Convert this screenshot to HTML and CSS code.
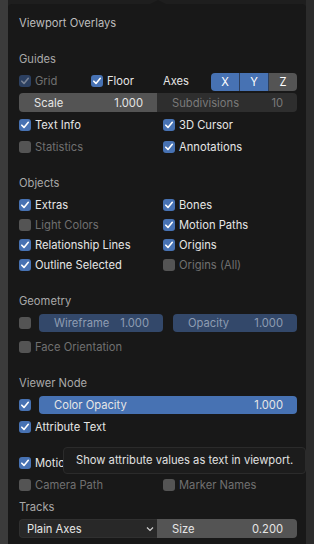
FILE: index.html
```html
<!DOCTYPE html>
<html lang="en">
<head>
    <meta charset="UTF-8">
    <meta name="viewport" content="width=device-width, initial-scale=1.0">
    <title>Viewport Overlays</title>
    <link rel="stylesheet" href="styles.css">
</head>
<body>
    <div class="panel">
        <div class="notch"></div>
        <div class="title">Viewport Overlays</div>

        <div class="heading">Guides</div>
        <div class="row guides-row">
            <div class="check off-dim w72"><span class="box on dim"><svg viewBox="0 0 12 12"><polyline points="2.8,6.2 5,8.4 9.3,3.3"/></svg></span>Grid</div>
            <div class="check w72"><span class="box on"><svg viewBox="0 0 12 12"><polyline points="2.8,6.2 5,8.4 9.3,3.3"/></svg></span>Floor</div>
            <div class="axes-label">Axes</div>
            <div class="toggle-group">
                <span class="toggle on">X</span>
                <span class="toggle on">Y</span>
                <span class="toggle">Z</span>
            </div>
        </div>
        <div class="row slider-row joined">
            <div class="slider grey left"><span>Scale</span><span>1.000</span></div>
            <div class="slider dark right muted"><span>Subdivisions</span><span>10</span></div>
        </div>
        <div class="row cols gap3">
            <div class="check"><span class="box on"><svg viewBox="0 0 12 12"><polyline points="2.8,6.2 5,8.4 9.3,3.3"/></svg></span>Text Info</div>
            <div class="check"><span class="box on"><svg viewBox="0 0 12 12"><polyline points="2.8,6.2 5,8.4 9.3,3.3"/></svg></span>3D Cursor</div>
        </div>
        <div class="row cols">
            <div class="check off-dim"><span class="box"></span>Statistics</div>
            <div class="check"><span class="box on"><svg viewBox="0 0 12 12"><polyline points="2.8,6.2 5,8.4 9.3,3.3"/></svg></span>Annotations</div>
        </div>

        <div class="heading">Objects</div>
        <div class="row cols">
            <div class="check"><span class="box on"><svg viewBox="0 0 12 12"><polyline points="2.8,6.2 5,8.4 9.3,3.3"/></svg></span>Extras</div>
            <div class="check"><span class="box on"><svg viewBox="0 0 12 12"><polyline points="2.8,6.2 5,8.4 9.3,3.3"/></svg></span>Bones</div>
        </div>
        <div class="row cols tight">
            <div class="check off-dim"><span class="box"></span>Light Colors</div>
            <div class="check"><span class="box on"><svg viewBox="0 0 12 12"><polyline points="2.8,6.2 5,8.4 9.3,3.3"/></svg></span>Motion Paths</div>
        </div>
        <div class="row cols tight">
            <div class="check"><span class="box on"><svg viewBox="0 0 12 12"><polyline points="2.8,6.2 5,8.4 9.3,3.3"/></svg></span>Relationship Lines</div>
            <div class="check"><span class="box on"><svg viewBox="0 0 12 12"><polyline points="2.8,6.2 5,8.4 9.3,3.3"/></svg></span>Origins</div>
        </div>
        <div class="row cols tight">
            <div class="check"><span class="box on"><svg viewBox="0 0 12 12"><polyline points="2.8,6.2 5,8.4 9.3,3.3"/></svg></span>Outline Selected</div>
            <div class="check off-dim"><span class="box"></span>Origins (All)</div>
        </div>

        <div class="heading">Geometry</div>
        <div class="row">
            <div class="check solo"><span class="box"></span></div>
            <div class="slider blue-dim w124"><span>Wireframe</span><span>1.000</span></div>
            <div class="slider blue-dim w124 ml10"><span>Opacity</span><span>1.000</span></div>
        </div>
        <div class="row gap4">
            <div class="check off-dim"><span class="box"></span>Face Orientation</div>
        </div>

        <div class="heading">Viewer Node</div>
        <div class="row">
            <div class="check solo"><span class="box on"><svg viewBox="0 0 12 12"><polyline points="2.8,6.2 5,8.4 9.3,3.3"/></svg></span></div>
            <div class="slider blue grow"><span>Color Opacity</span><span>1.000</span></div>
        </div>
        <div class="row">
            <div class="check"><span class="box on"><svg viewBox="0 0 12 12"><polyline points="2.8,6.2 5,8.4 9.3,3.3"/></svg></span>Attribute Text</div>
        </div>

        <div class="row gap16">
            <div class="check"><span class="box on"><svg viewBox="0 0 12 12"><polyline points="2.8,6.2 5,8.4 9.3,3.3"/></svg></span>Motion Tracking</div>
        </div>
        <div class="row cols">
            <div class="check off-dim"><span class="box"></span>Camera Path</div>
            <div class="check off-dim"><span class="box"></span>Marker Names</div>
        </div>
        <div class="heading near">Tracks</div>
        <div class="row slider-row joined">
            <div class="dropdown left"><span>Plain Axes</span><svg viewBox="0 0 8 6"><polyline points="1,1.5 4,4.5 7,1.5"/></svg></div>
            <div class="slider grey right"><span>Size</span><span>0.200</span></div>
        </div>

        <div class="tooltip">Show attribute values as text in viewport.</div>
    </div>
</body>
</html>
```

FILE: styles.css
```css
body {
    margin: 0;
    width: 314px;
    height: 544px;
    overflow: hidden;
    font-family: Inter, 'Noto Sans', sans-serif;
    font-size: 11.2px;
    color: #e6e6e6;
    background: linear-gradient(to right, #3b3b3b 0, #3b3b3b 8px, #1e1e1e 8px, #1e1e1e 306px, #2b2b2b 306px);
}

.panel {
    position: relative;
    margin: 4px 8px 0 8px;
    height: 540px;
    box-sizing: border-box;
    padding: 9px 9px 0 11px;
    background-color: #181818;
    border-radius: 4px 4px 0 0;
}

.notch {
    position: absolute;
    top: -4px;
    left: 142px;
    width: 0;
    height: 0;
    border-left: 8px solid transparent;
    border-right: 8px solid transparent;
    border-bottom: 4px solid #181818;
}

.title {
    height: 20px;
    line-height: 20px;
    color: #bdbdbd;
}

.heading {
    height: 20px;
    line-height: 20px;
    margin-top: 16px;
    color: #a8a8a8;
}

.heading.near {
    margin-top: 2px;
}

.row {
    display: flex;
    align-items: center;
    height: 20px;
    margin-top: 2px;
}

.row.cols {
    display: grid;
    grid-template-columns: 144px 1fr;
}

.row.tight {
    margin-top: 0;
}

.row.gap3 {
    margin-top: 3px;
}

.row.gap4 {
    margin-top: 4px;
}

.row.gap16 {
    margin-top: 16px;
}

.slider-row {
    height: 19px;
}

.check {
    display: flex;
    align-items: center;
    white-space: nowrap;
}

.check.off-dim {
    color: #707070;
}

.check.solo {
    width: 20px;
    flex: none;
}

.w72 {
    width: 72px;
}

.box {
    width: 12px;
    height: 12px;
    margin-right: 4px;
    border-radius: 3px;
    background-color: #545454;
    display: flex;
    flex: none;
}

.box.on {
    background-color: #4772b3;
}

.box.on.dim {
    background-color: #2c4061;
}

.box svg {
    width: 12px;
    height: 12px;
    fill: none;
    stroke: #ffffff;
    stroke-width: 1.6;
    stroke-linecap: round;
    stroke-linejoin: round;
}

.box.dim svg {
    stroke: #7a8496;
}

.axes-label {
    width: 48px;
}

.toggle-group {
    flex: 1;
    display: flex;
    height: 18px;
    margin-top: 1px;
    border-radius: 4px;
    overflow: hidden;
}

.toggle {
    flex: 1;
    display: flex;
    align-items: center;
    justify-content: center;
    background-color: #545454;
    color: #ffffff;
}

.toggle.on {
    background-color: #4772b3;
}

.toggle + .toggle {
    border-left: 1px solid #2d3f5c;
}

.slider {
    display: flex;
    justify-content: space-between;
    align-items: center;
    height: 18px;
    padding: 0 14px 0 15px;
    border-radius: 4px;
    box-sizing: border-box;
    white-space: nowrap;
}

.slider-row .slider,
.slider-row .dropdown {
    height: 19px;
}

.slider.grey {
    background-color: #545454;
}

.slider.dark {
    background-color: #2e2e2e;
}

.slider.muted {
    color: #7a7a7a;
}

.slider.blue {
    background-color: #4772b3;
}

.slider.blue-dim {
    background-color: #33486a;
    color: #8e9cb2;
}

.w124 {
    width: 124px;
}

.ml10 {
    margin-left: 10px;
}

.grow {
    flex: 1;
}

.joined .left {
    width: 138px;
    border-radius: 4px 0 0 4px;
}

.joined .right {
    flex: 1;
    border-radius: 0 4px 4px 0;
}

.dropdown {
    display: flex;
    align-items: center;
    justify-content: space-between;
    box-sizing: border-box;
    padding: 0 3px 0 7px;
    background-color: #282828;
    border: 1px solid #303030;
    border-right: none;
}

.dropdown svg {
    width: 8px;
    height: 6px;
    fill: none;
    stroke: #d0d0d0;
    stroke-width: 1.2;
}

/* tooltip sits over the Motion Tracking row, as in the screenshot */
.tooltip {
    position: absolute;
    left: 55px;
    top: 443px;
    width: 243px;
    height: 27px;
    box-sizing: border-box;
    padding-left: 12px;
    line-height: 25px;
    background-color: #1c1c1c;
    border: 1px solid #2b2b2b;
    border-radius: 4px;
    color: #e0e0e0;
    white-space: nowrap;
}
```
